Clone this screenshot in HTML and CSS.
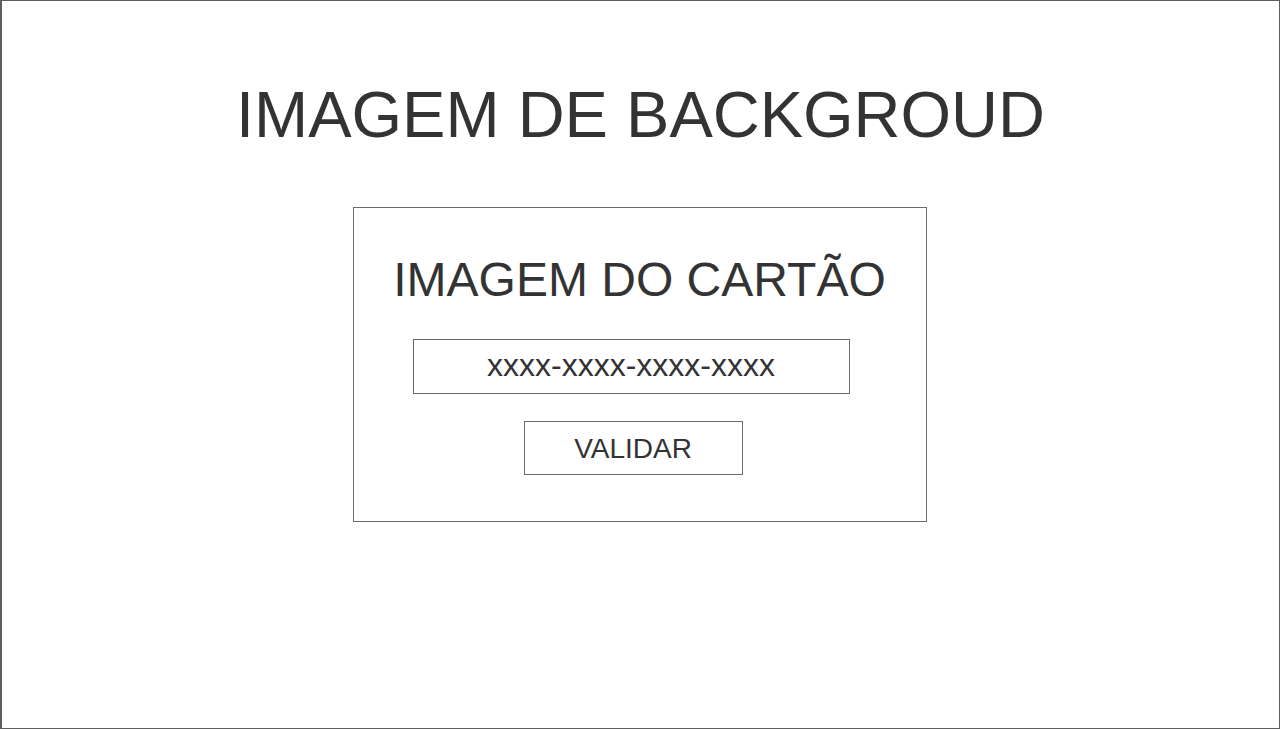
FILE: index.html
```html
<!DOCTYPE html>
<html lang="pt">
<head>
<meta charset="utf-8">
<title>Validar cartão</title>
<link rel="stylesheet" href="styles.css">
</head>
<body>
<main class="page">
  <h1 class="page-title">IMAGEM DE BACKGROUD</h1>
  <section class="card">
    <h2 class="card-title">IMAGEM DO CARTÃO</h2>
    <div class="card-input">xxxx-xxxx-xxxx-xxxx</div>
    <div class="card-button">VALIDAR</div>
  </section>
</main>
</body>
</html>
```

FILE: styles.css
```css
html, body {
  margin: 0;
  padding: 0;
  background: #ffffff;
}

.page {
  box-sizing: border-box;
  width: 1280px;
  height: 729px;
  border: 1px solid #5e5e5e;
  border-left-width: 2px;
  padding-top: 81px;
  display: flex;
  flex-direction: column;
  align-items: center;
  font-family: "Liberation Sans", Arial, sans-serif;
  color: #333333;
}

.page-title {
  margin: 0;
  font-size: 65px;
  line-height: 65px;
  font-weight: normal;
  text-align: center;
}

.card {
  box-sizing: border-box;
  margin-top: 60px;
  margin-left: -2px;
  width: 574px;
  height: 315px;
  border: 1px solid #6a6a6a;
  padding-top: 48px;
  display: flex;
  flex-direction: column;
  align-items: flex-start;
}

.card-title {
  align-self: stretch;
  margin: 0;
  font-size: 48px;
  line-height: 48px;
  font-weight: normal;
  text-align: center;
}

.card-input {
  box-sizing: border-box;
  margin-top: 35px;
  margin-left: 59px;
  width: 437px;
  height: 55px;
  border: 1px solid #6a6a6a;
  font-size: 32px;
  line-height: 50px;
  text-align: center;
}

.card-button {
  box-sizing: border-box;
  margin-top: 27px;
  margin-left: 170px;
  width: 219px;
  height: 54px;
  border: 1px solid #6a6a6a;
  font-size: 28px;
  line-height: 54px;
  text-align: center;
}
```
